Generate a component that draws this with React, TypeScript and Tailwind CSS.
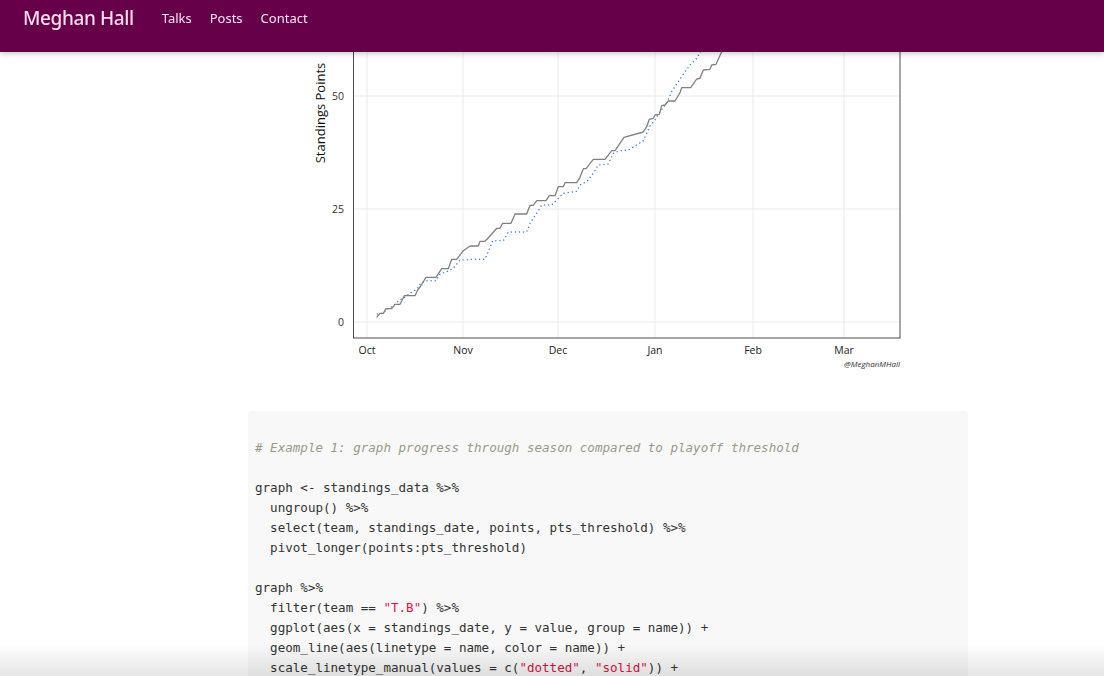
import React from "react";

type P = [number, number];

const z2 = (pts: P[]): P[] => pts.map(([x, y]) => [300 + x / 3, 50 + y / 3]);
const z3 = (pts: P[]): P[] => pts.map(([x, y]) => [600 + x / 3, 50 + y / 3]);

const solid: P[] = [
  ...z2([
    [230, 802], [240, 790], [250, 790], [258, 776], [275, 776], [285, 763], [300, 763], [313, 737], [345, 737],
    [352, 722], [362, 708], [378, 682], [408, 682], [425, 656], [445, 656], [455, 628], [470, 628], [490, 602],
    [510, 588], [535, 588], [540, 574], [555, 574], [568, 560], [590, 535], [600, 535], [608, 520], [633, 520],
    [645, 492], [680, 492], [690, 466], [700, 466], [710, 452], [738, 452], [748, 437], [765, 437], [775, 410],
    [790, 410], [795, 398], [830, 398], [840, 382], [850, 356], [858, 356], [880, 328],
  ]),
  ...z3([
    [15, 328], [35, 302], [45, 302], [72, 262], [130, 246], [140, 230], [148, 208], [160, 205], [165, 195],
    [178, 193], [185, 167], [195, 165], [205, 153], [225, 153], [240, 128], [245, 113], [272, 113], [290, 87],
    [300, 85], [310, 60], [330, 58], [335, 45], [348, 43], [365, 5], [400, -60],
  ]),
];

const dotted: P[] = [
  ...z2([
    [232, 792], [248, 790], [262, 778], [280, 768], [295, 752], [310, 745], [330, 730], [350, 718], [362, 700],
    [378, 692], [408, 692], [420, 672], [440, 665], [460, 655], [480, 630], [520, 628], [555, 628], [565, 605],
    [578, 572], [610, 572], [625, 546], [680, 546], [690, 520], [710, 490], [725, 465], [755, 465], [770, 450],
    [790, 430], [830, 424], [840, 405], [860, 395], [880, 370], [895, 345], [925, 342],
  ]),
  ...z3([
    [25, 342], [40, 310], [60, 302], [85, 300], [110, 285], [130, 272], [140, 250], [150, 228], [165, 210],
    [180, 185], [200, 160], [215, 125], [235, 95], [255, 65], [270, 45], [290, 25], [305, 0], [330, -60],
  ]),
];

const toPath = (pts: P[]) => pts.map(([x, y], i) => `${i ? "L" : "M"}${x.toFixed(1)} ${y.toFixed(1)}`).join(" ");

const months: [string, number][] = [
  ["Oct", 367],
  ["Nov", 463],
  ["Dec", 558],
  ["Jan", 655],
  ["Feb", 753],
  ["Mar", 844],
];
const yTicks: [string, number][] = [
  ["50", 96],
  ["25", 209],
  ["0", 322],
];

function Chart() {
  return (
    <svg width={600} height={372} viewBox="0 0 600 372" className="block mx-auto">
      <g transform="translate(-308,0)" fontFamily="'Open Sans', 'Noto Sans', sans-serif">
        <rect x={353} y={-20} width={547} height={358} fill="#ffffff" />
        {months.map(([m, x]) => (
          <line key={m} x1={x} x2={x} y1={-20} y2={338} stroke="#ebebeb" strokeWidth={1} />
        ))}
        {yTicks.map(([t, y]) => (
          <line key={t} x1={353} x2={900} y1={y} y2={y} stroke="#ebebeb" strokeWidth={1} />
        ))}
        <path d={toPath(dotted)} fill="none" stroke="#3d7fd1" strokeWidth={1.4} strokeDasharray="0.1 4" strokeLinecap="round" />
        <path d={toPath(solid)} fill="none" stroke="#808080" strokeWidth={1.3} strokeLinejoin="round" />
        <rect x={353.5} y={-20} width={546.5} height={358} fill="none" stroke="#4d4d4d" strokeWidth={1} />
        {yTicks.map(([t, y]) => (
          <text key={t} x={344} y={y + 3.8} fontSize={10.5} fill="#333" textAnchor="end">
            {t}
          </text>
        ))}
        {months.map(([m, x]) => (
          <text key={m} x={x} y={354} fontSize={10.5} fill="#222" textAnchor="middle">
            {m}
          </text>
        ))}
        <text x={0} y={0} fontSize={13} fill="#111" textAnchor="middle" transform="translate(325,113) rotate(-90)">
          Standings Points
        </text>
        <text x={900} y={367} fontSize={8} fill="#333" fontStyle="italic" textAnchor="end">
          @MeghanMHall
        </text>
      </g>
    </svg>
  );
}

const C = ({ children }: { children: React.ReactNode }) => <span className="text-[#999988] italic">{children}</span>;
const S = ({ children }: { children: React.ReactNode }) => <span className="text-[#dd1144]">{children}</span>;

export default function App() {
  return (
    <div className="h-[676px] overflow-hidden bg-white relative">
      <nav className="fixed top-0 left-0 right-0 h-[52px] bg-[#660049] z-10 shadow-[0_2px_5px_rgba(0,0,0,0.2)] flex items-start pt-[7px] pl-[23px] font-['Noto_Sans','Open_Sans',sans-serif]">
        <span className="text-[#fbdcea] text-[19px] font-medium tracking-[-0.4px] leading-[22px]">Meghan Hall</span>
        <div className="flex gap-[18px] ml-[28px] mt-[2px] text-[13px] leading-[18px] text-[#fbe7f0]">
          <span>Talks</span>
          <span>Posts</span>
          <span>Contact</span>
        </div>
      </nav>
      <main className="ml-[248px] w-[720px]">
        <Chart />
        <pre className="mt-[39px] bg-[#f8f8f8] rounded-[4px] pt-[27px] pl-[7px] pb-[20px] text-[12.55px] leading-[20px] text-[#333] font-['DejaVu_Sans_Mono','Liberation_Mono',monospace] whitespace-pre">
          <C># Example 1: graph progress through season compared to playoff threshold</C>
          {"\n\n"}
          {"graph <- standings_data %>%\n"}
          {"  ungroup() %>%\n"}
          {"  select(team, standings_date, points, pts_threshold) %>%\n"}
          {"  pivot_longer(points:pts_threshold)\n\n"}
          {"graph %>%\n"}
          {"  filter(team == "}
          <S>"T.B"</S>
          {") %>%\n"}
          {"  ggplot(aes(x = standings_date, y = value, group = name)) +\n"}
          {"  geom_line(aes(linetype = name, color = name)) +\n"}
          {"  scale_linetype_manual(values = c("}
          <S>"dotted"</S>
          {", "}
          <S>"solid"</S>
          {")) +"}
        </pre>
      </main>
      <div className="fixed bottom-0 left-0 right-0 h-[32px] bg-gradient-to-b from-transparent to-[rgba(0,0,0,0.1)] pointer-events-none" />
    </div>
  );
}
